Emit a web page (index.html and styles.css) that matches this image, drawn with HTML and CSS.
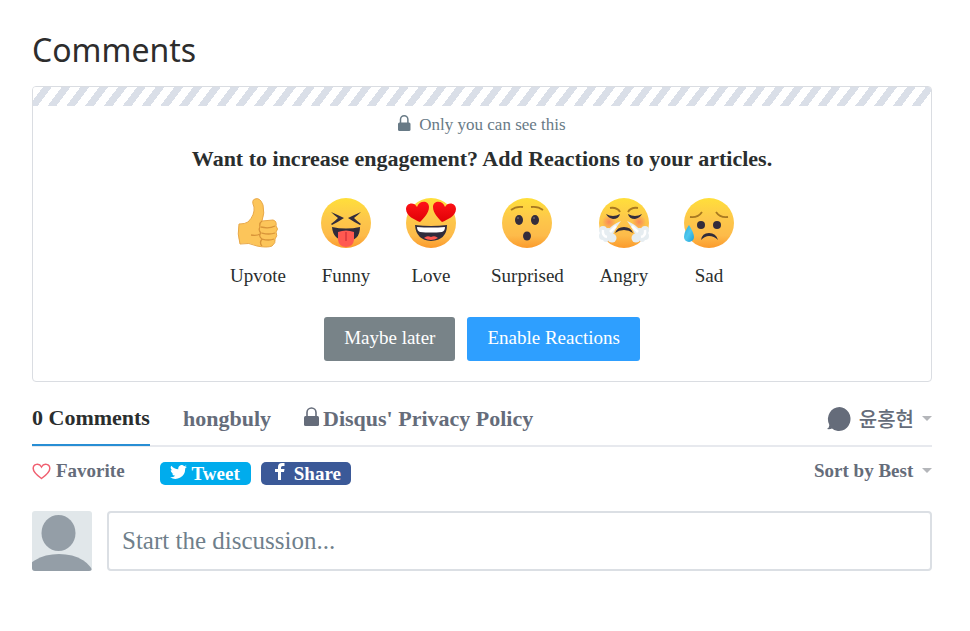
FILE: index.html
```html
<!DOCTYPE html>
<html lang="en">
<head>
<meta charset="utf-8">
<title>Comments</title>
<link rel="stylesheet" href="styles.css">
</head>
<body>
<svg class="defs" width="0" height="0" aria-hidden="true">
  <defs>
    <linearGradient id="face" x1="0" y1="0" x2="0" y2="1"><stop offset="0" stop-color="#ffdf3a"/><stop offset=".4" stop-color="#fdc84a"/><stop offset=".75" stop-color="#fdbb4a"/><stop offset="1" stop-color="#fb9a2c"/></linearGradient>
    <linearGradient id="heart" x1="0" y1="0" x2="0" y2="1"><stop offset="0" stop-color="#ff1418"/><stop offset="1" stop-color="#e00006"/></linearGradient>
    <linearGradient id="drop" x1="0" y1="0" x2="1" y2="1"><stop offset="0" stop-color="#29a9dc"/><stop offset=".5" stop-color="#4fc8ee"/><stop offset="1" stop-color="#1f9ed6"/></linearGradient>
    <radialGradient id="blush"><stop offset="0" stop-color="#f7785c" stop-opacity=".8"/><stop offset="1" stop-color="#f7785c" stop-opacity="0"/></radialGradient>
    <path id="heart-shape" d="M14 20C9 18 0 14 0 7C0 1 8-1 11 5C13-2 23-2 23 5C23 11 18 16 14 20Z"/>
    <g id="steam"><circle cx="4" cy="32" r="4"/><circle cx="4" cy="38" r="4"/><circle cx="7" cy="41" r="3"/><circle cx="13" cy="40" r="4.500"/><circle cx="9" cy="35" r="5"/><path d="M22 23Q14 26 9 32L14 36Q17 29 22 23Z"/></g>
  </defs>
</svg>
<main class="page">
  <h1 class="title">Comments</h1>

  <section class="promo">
    <div class="stripes"></div>
    <p class="private">
      <svg width="13" height="17" viewBox="0 0 13 17" aria-hidden="true"><path d="M2.500 8V4.500a3.700 3.700 0 0 1 7.400 0V8" fill="none" stroke="#687a86" stroke-width="1.500"/><rect y="7.500" width="12.500" height="8.500" rx="1.500" fill="#687a86"/></svg>
      Only you can see this
    </p>
    <h2 class="question">Want to increase engagement? Add Reactions to your articles.</h2>
    <ul class="reactions">
      <li class="reaction">
        <svg width="50" height="50" viewBox="0 0 50 50" aria-hidden="true">
          <path d="M6 26Q12 26 15 24Q22 17 21 9Q18 2 22 1Q27-1 30 7Q32 15 29 23L40 22Q44 23 43 28Q46 31 43 34Q45 38 42 41Q43 45 39 48Q34 50 24 48Q16 44 7 46Q4 36 6 26Z" fill="#fcc55a" stroke="#e8a848" stroke-width="1"/>
          <path d="M29 23Q26 25 27 29Q25 32 28 35Q25 38 29 41Q26 45 29 48M28 29Q36 31 42 28M29 35Q36 37 42 35M29 41Q36 43 41 41M18 37Q24 38 27 36" fill="none" stroke="#d89439" stroke-width="1.300"/>
        </svg>
        <span>Upvote</span>
      </li>
      <li class="reaction">
        <svg width="50" height="50" viewBox="0 0 50 50" aria-hidden="true">
          <circle cx="25" cy="25" r="25" fill="url(#face)"/>
          <path d="M10 14Q17 17 23 20Q17 24 11 27L10 26Q14 23 17 20Q13 17 10 14ZM40 14Q33 17 27 20Q33 24 39 27L40 26Q36 23 33 20Q37 17 40 14Z" fill="#342d3c"/>
          <path d="M11 29Q25 32 39 29Q39 43 25 43Q12 42 11 29Z" fill="#302c3b"/>
          <path d="M17 34Q25 31 33 34V42Q32 49 25 49Q18 49 17 42Z" fill="#ff5950"/>
          <path d="M25 34V43" stroke="#d8363c" stroke-width="1.500"/>
        </svg>
        <span>Funny</span>
      </li>
      <li class="reaction">
        <svg width="50" height="50" viewBox="0 0 50 50" aria-hidden="true">
          <circle cx="25" cy="25" r="25" fill="url(#face)"/>
          <use href="#heart-shape" transform="translate(0 4)" fill="url(#heart)"/>
          <use href="#heart-shape" transform="matrix(-1 0 0 1 50 4)" fill="url(#heart)"/>
          <path d="M9 27Q25 29 41 27Q41 42 25 43Q10 42 9 27Z" fill="#302c3b"/>
          <path d="M11 29Q25 30 39 29Q39 33 36 34Q25 35 14 34Q11 33 11 29Z" fill="#fff"/>
          <path d="M18 40Q21 37 25 39Q29 37 32 40Q25 44 18 40Z" fill="#ff5950"/>
        </svg>
        <span>Love</span>
      </li>
      <li class="reaction">
        <svg width="50" height="50" viewBox="0 0 50 50" aria-hidden="true">
          <circle cx="25" cy="25" r="25" fill="url(#face)"/>
          <path d="M9 12Q14 8 21 9M29 9Q36 8 41 12" fill="none" stroke="#a87921" stroke-width="1.800"/>
          <ellipse cx="17" cy="22" rx="4" ry="5" fill="#342d3c"/><ellipse cx="33" cy="22" rx="4" ry="5" fill="#342d3c"/>
          <circle cx="16" cy="20" r="1" fill="#66616b"/><circle cx="32" cy="20" r="1" fill="#66616b"/>
          <ellipse cx="25" cy="38" rx="4" ry="4.500" fill="#342d3c"/>
        </svg>
        <span>Surprised</span>
      </li>
      <li class="reaction">
        <svg width="50" height="50" viewBox="0 0 50 50" aria-hidden="true">
          <circle cx="25" cy="25" r="25" fill="url(#face)"/>
          <circle cx="10" cy="24" r="7" fill="url(#blush)"/><circle cx="40" cy="24" r="7" fill="url(#blush)"/>
          <path d="M11 10Q18 9 21 14M39 10Q32 9 29 14" fill="none" stroke="#a87921" stroke-width="2"/>
          <path d="M7 16Q14 20 21 16Q20 21 14 21Q9 20 7 16ZM43 16Q36 20 29 16Q30 21 36 21Q41 20 43 16Z" fill="#342d3c"/>
          <path d="M16 35Q18 29 25 29Q32 29 34 35Q30 32 25 32Q20 32 16 35Z" fill="#302c3b"/>
          <use href="#steam" fill="#e6edf1"/><use href="#steam" transform="matrix(-1 0 0 1 50 0)" fill="#e6edf1"/>
          <path d="M4 32Q3 38 8 39M11 34L17 28M46 32Q47 38 42 39M39 34L33 28" fill="none" stroke="#fff" stroke-width="2.500"/>
        </svg>
        <span>Angry</span>
      </li>
      <li class="reaction">
        <svg width="50" height="50" viewBox="0 0 50 50" aria-hidden="true">
          <circle cx="25" cy="25" r="25" fill="url(#face)"/>
          <path d="M6 19Q14 20 18 14M32 14Q36 20 44 19" fill="none" stroke="#a87921" stroke-width="1.800"/>
          <circle cx="17" cy="27" r="4" fill="#342d3c"/><circle cx="33" cy="27" r="4" fill="#342d3c"/>
          <path d="M17 42Q18 35 25 35Q32 35 34 42Q30 38 25 38Q21 38 17 42Z" fill="#302c3b"/>
          <path d="M5 27Q10 35 10 39A5 5 0 0 1 0 39Q0 34 5 27Z" fill="url(#drop)"/>
        </svg>
        <span>Sad</span>
      </li>
    </ul>
    <div class="actions">
      <button class="btn btn-muted" type="button">Maybe later</button>
      <button class="btn btn-primary" type="button">Enable Reactions</button>
    </div>
  </section>

  <nav class="tabs">
    <a class="tab tab-active" href="#comments">0 Comments</a>
    <a class="tab" href="#community">hongbuly</a>
    <a class="tab tab-privacy" href="#privacy">
      <svg width="15" height="20" viewBox="0 0 15 20" aria-hidden="true"><path d="M3 9V5.500a4.500 4.500 0 0 1 9 0V9" fill="none" stroke="#656c7a" stroke-width="1.600"/><rect y="9" width="15" height="10" rx="1.500" fill="#656c7a"/></svg>
      Disqus' Privacy Policy
    </a>
    <button class="user" type="button" aria-haspopup="true">
      <svg width="24" height="24" viewBox="0 0 24 24" aria-hidden="true"><path d="M12.500 0A11.500 12 0 1 1 5 21.500Q3 22.500 0 22Q3 20 2 17A12 12 0 0 1 12.500 0Z" fill="#656c7a"/></svg>
      <span>윤홍현</span>
      <span class="caret"></span>
    </button>
  </nav>

  <div class="toolbar">
    <button class="favorite" type="button">
      <svg width="19" height="17" viewBox="0 0 19 17" aria-hidden="true"><path d="M9.500 15.500C6 13 1.200 9.500 1.200 5.500C1.200 1 7-.5 9.500 4C12-.5 17.800 1 17.800 5.500C17.800 9.500 13 13 9.500 15.500Z" fill="none" stroke="#f05f70" stroke-width="1.500"/></svg>
      Favorite
    </button>
    <button class="share tweet" type="button">
      <svg width="17" height="14" viewBox="0 0 24 20" aria-hidden="true"><path d="M24 2.400a10 10 0 0 1-2.800.8A5 5 0 0 0 23.300.5a10 10 0 0 1-3.100 1.200A4.900 4.900 0 0 0 11.800 6.200 14 14 0 0 1 1.700 1a4.900 4.900 0 0 0 1.500 6.600A5 5 0 0 1 1 7a4.900 4.900 0 0 0 3.900 4.900 5 5 0 0 1-2.200.1 4.900 4.900 0 0 0 4.600 3.400A10 10 0 0 1 0 17.500 14 14 0 0 0 21.500 5 10 10 0 0 0 24 2.400Z" fill="#fff"/></svg>
      Tweet
    </button>
    <button class="share facebook" type="button">
      <svg width="10" height="17" viewBox="0 0 10 17" aria-hidden="true"><path d="M3 17V9H0V6H3V4Q3 0 7 0H9.500V3H7.500Q6 3 6 4.500V6H9.500L9 9H6V17Z" fill="#fff"/></svg>
      Share
    </button>
    <label class="sort">
      <select class="sort-select" aria-label="Sort"><option>Sort by Best</option></select>
      <span class="caret"></span>
    </label>
  </div>

  <form class="composer">
    <svg class="avatar" width="60" height="60" viewBox="0 0 60 60" aria-hidden="true"><rect width="60" height="60" fill="#e1e7ea"/><ellipse cx="26.500" cy="22" rx="17" ry="18" fill="#949ea7"/><ellipse cx="27" cy="64" rx="34" ry="21" fill="#949ea7"/></svg>
    <input class="message" type="text" placeholder="Start the discussion..." aria-label="Start the discussion">
  </form>
</main>
</body>
</html>
```

FILE: styles.css
```css
* { box-sizing: border-box; }

body {
  margin: 0;
  background: #fff;
  color: #2a2e2e;
  font-family: "Liberation Serif", "Noto Sans CJK KR", serif;
}

h1, h2, p, ul { margin: 0; padding: 0; }
svg { display: block; flex: none; }
.defs { position: absolute; }

button, select, input { font: inherit; color: inherit; }
button { border: 0; background: none; padding: 0; cursor: pointer; }

.page { padding: 28px 38px 32px 32px; }

.title {
  font: 400 32px/44px "Noto Sans", sans-serif;
  color: #2d2d2d;
  margin-bottom: 14px;
}

.promo {
  border: 1px solid #dadde2;
  border-radius: 4px;
  padding-bottom: 20px;
  overflow: hidden;
}

.stripes {
  height: 19px;
  background: repeating-linear-gradient(127deg, #fff 0 8px, #dadfe8 8px 15px);
}

.private {
  display: flex;
  justify-content: center;
  align-items: center;
  gap: 8px;
  height: 38px;
  font-size: 17px;
  color: #687a86;
}
.private svg { margin-bottom: 4px; }

.question {
  font-size: 22px;
  line-height: 30px;
  text-align: center;
}

.reactions {
  display: flex;
  justify-content: center;
  gap: 35px;
  list-style: none;
  margin-top: 24px;
  font-size: 19px;
  line-height: 24px;
}

.reaction {
  display: flex;
  flex-direction: column;
  align-items: center;
  gap: 16px;
  min-width: 50px;
}

.actions {
  display: flex;
  justify-content: center;
  gap: 12px;
  margin-top: 29px;
}

.btn {
  height: 44px;
  padding: 0 20px 2px;
  border-radius: 3px;
  color: #fff;
  font-size: 19px;
}
.btn-muted { background: #788388; }
.btn-primary { background: #2e9fff; }

.tabs {
  display: flex;
  gap: 33px;
  height: 65px;
  border-bottom: 2px solid #e7e9ee;
  color: #656c7a;
  font-size: 22px;
  font-weight: 700;
}

.tab {
  display: flex;
  align-items: center;
  padding-top: 10px;
  color: inherit;
  text-decoration: none;
}
.tab-active {
  color: #2a2e2e;
  border-bottom: 2px solid #288ed4;
  margin-bottom: -1px;
}
.tab-privacy { gap: 4px; }
.tab-privacy svg { margin-bottom: 4px; }

.user {
  display: flex;
  align-items: center;
  gap: 8px;
  margin-left: auto;
  padding-top: 10px;
  font-size: 20px;
  font-weight: 500;
}

.caret {
  border: 5px solid transparent;
  border-top-color: #b4b6ba;
  border-bottom: 0;
}

.toolbar {
  display: flex;
  align-items: flex-start;
  padding-top: 13px;
  color: #656c7a;
  font-size: 19px;
  font-weight: 700;
}

.favorite {
  display: flex;
  align-items: center;
  gap: 5px;
  margin-right: 35px;
}

.share {
  display: flex;
  align-items: center;
  gap: 5px;
  height: 23px;
  margin: 2px 10px 0 0;
  padding: 0 10px;
  border-radius: 5px;
  color: #fff;
}
.share svg { margin-bottom: 4px; }
.tweet { padding-right: 11px; }
.tweet { background: #00aced; }
.facebook { gap: 9px; padding-left: 14px; background: #3b5998; }

.sort {
  display: flex;
  align-items: center;
  gap: 8px;
  margin-left: auto;
}

.sort-select {
  appearance: none;
  border: 0;
  padding: 0;
  background: none;
}

.composer {
  display: flex;
  gap: 15px;
  margin-top: 26px;
}

.avatar { border-radius: 3px; }

.message {
  flex: 1;
  min-width: 0;
  height: 60px;
  padding: 0 13px;
  border: 2px solid #dbdfe4;
  border-radius: 4px;
  font-size: 25px;
}
.message::placeholder { color: #6f7f8b; opacity: 1; }
```
